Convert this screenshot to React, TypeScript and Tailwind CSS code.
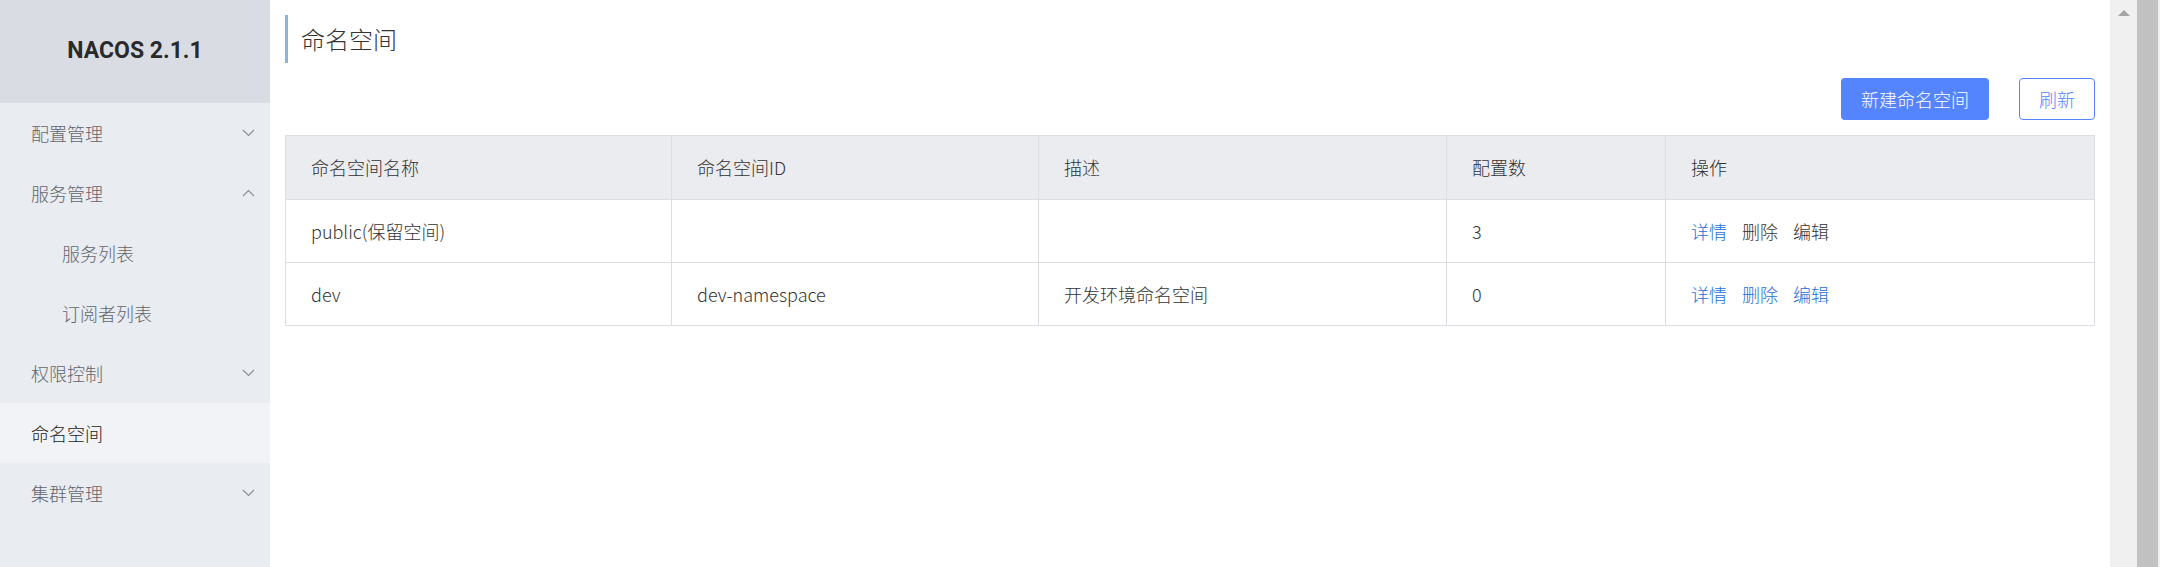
import React from "react";

const FONT = { fontFamily: '"Noto Sans CJK SC", "Noto Sans", sans-serif' };

function Chevron({ up }: { up?: boolean }) {
  return (
    <svg width="13" height="8" viewBox="0 0 13 8" className="shrink-0">
      <path
        d={up ? "M1 7 L6.5 1.5 L12 7" : "M1 1 L6.5 6.5 L12 1"}
        fill="none"
        stroke="#8a8f99"
        strokeWidth="1.2"
      />
    </svg>
  );
}

function MenuItem({
  label,
  sub,
  chevron,
  active,
}: {
  label: string;
  sub?: boolean;
  chevron?: "up" | "down";
  active?: boolean;
}) {
  return (
    <div
      className={
        "flex h-[60px] items-center justify-between pr-[15px] text-[18px] font-light " +
        (sub ? "pl-[62px] " : "pl-[31px] ") +
        (active ? "bg-[#f2f3f6] text-[#222]" : "text-[#62656c]")
      }
    >
      <span>{label}</span>
      {chevron && <Chevron up={chevron === "up"} />}
    </div>
  );
}

const rows = [
  { name: "public(保留空间)", id: "", desc: "", count: "3", locked: true },
  { name: "dev", id: "dev-namespace", desc: "开发环境命名空间", count: "0", locked: false },
];

export default function App() {
  return (
    <div className="flex h-[567px] w-[2160px] overflow-hidden bg-white" style={FONT}>
      {/* Sidebar */}
      <aside className="flex w-[270px] shrink-0 flex-col bg-[#e9ecf0]">
        <div className="flex h-[103px] items-center justify-center bg-[#d9dde3]">
          <span
            className="text-[23px] font-bold text-[#2a2a2a]"
            style={{ fontFamily: 'Roboto, "Liberation Sans", sans-serif' }}
          >
            NACOS 2.1.1
          </span>
        </div>
        <MenuItem label="配置管理" chevron="down" />
        <MenuItem label="服务管理" chevron="up" />
        <MenuItem label="服务列表" sub />
        <MenuItem label="订阅者列表" sub />
        <MenuItem label="权限控制" chevron="down" />
        <MenuItem label="命名空间" active />
        <MenuItem label="集群管理" chevron="down" />
      </aside>

      {/* Main */}
      <main className="flex-1 px-[15px] pt-[15px]">
        <div className="flex h-[48px] items-center border-l-[3px] border-[#86b5e0] pl-[13px]">
          <h1 className="text-[24px] font-light text-[#333]">命名空间</h1>
        </div>

        <div className="mt-[15px] flex justify-end gap-[30px]">
          <button className="h-[42px] rounded-[4px] bg-[#5584ff] px-[20px] text-[18px] font-light text-white">
            新建命名空间
          </button>
          <button className="h-[42px] rounded-[4px] border border-[#5584ff] bg-white px-[19px] text-[18px] font-light text-[#5584ff]">
            刷新
          </button>
        </div>

        <table className="mt-[15px] w-full table-fixed border-collapse border border-[#dcdee3] text-[18px] font-light text-[#333]">
          <colgroup>
            <col className="w-[386px]" />
            <col className="w-[367px]" />
            <col className="w-[408px]" />
            <col className="w-[219px]" />
            <col />
          </colgroup>
          <thead>
            <tr className="h-[64px] bg-[#ebecf0]">
              {["命名空间名称", "命名空间ID", "描述", "配置数", "操作"].map((h) => (
                <th
                  key={h}
                  className="border border-[#dcdee3] px-[25px] text-left font-light"
                >
                  {h}
                </th>
              ))}
            </tr>
          </thead>
          <tbody>
            {rows.map((r) => (
              <tr key={r.name} className="h-[63px]">
                <td className="border border-[#dcdee3] px-[25px]">{r.name}</td>
                <td className="border border-[#dcdee3] px-[25px]">{r.id}</td>
                <td className="border border-[#dcdee3] px-[25px]">{r.desc}</td>
                <td className="border border-[#dcdee3] px-[25px]">{r.count}</td>
                <td className="border border-[#dcdee3] px-[25px]">
                  <div className="flex gap-[15px]">
                    <a className="text-[#1f6fd6]">详情</a>
                    <a className={r.locked ? "text-[#333]" : "text-[#1f6fd6]"}>删除</a>
                    <a className={r.locked ? "text-[#333]" : "text-[#1f6fd6]"}>编辑</a>
                  </div>
                </td>
              </tr>
            ))}
          </tbody>
        </table>
      </main>

      {/* Scrollbar */}
      <div className="flex w-[50px] shrink-0 bg-[#f0f0f0]">
        <div className="flex w-[27px] justify-center pt-[10px]">
          <div className="h-0 w-0 border-x-[6px] border-b-[6px] border-x-transparent border-b-[#a3a3a3]" />
        </div>
        <div className="w-[21px] bg-[#c1c1c1]" />
      </div>
    </div>
  );
}
